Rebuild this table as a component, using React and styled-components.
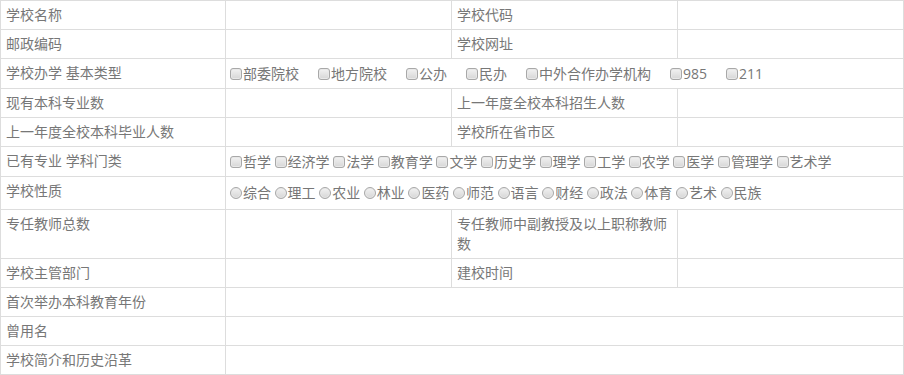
import styled, { createGlobalStyle } from 'styled-components';

const GlobalStyle = createGlobalStyle`
  body {
    margin: 0;
    background: #fff;
  }
`;

const InfoTable = styled.table`
  width: 904px;
  table-layout: fixed;
  border-collapse: collapse;
  font-family: "Open Sans", "Noto Sans CJK SC", sans-serif;
  font-size: 14px;
  line-height: 20px;
  color: #777;
`;

const Col = styled.col`
  width: ${props => props.$w}px;
`;

const Cell = styled.td`
  border: 1px solid #ddd;
  padding: 4px 5px;
  vertical-align: top;
  height: 20px;
  word-break: break-all;
`;

const Options = styled.div`
  display: flex;
  align-items: center;
  flex-wrap: wrap;
  height: ${props => props.$h}px;
  column-gap: ${props => props.$gap}px;
  margin-left: -1px;
`;

const Choice = styled.label`
  display: inline-flex;
  align-items: center;
  white-space: nowrap;
`;

const Tick = styled.input`
  appearance: none;
  width: 12px;
  height: 12px;
  margin: 0 1px 0 0;
  border: 1px solid #a8a8a8;
  border-radius: ${props => props.type === 'radio' ? '50%' : '3px'};
  background: linear-gradient(#f2f2f2, #d6d6d6);
  box-shadow: inset 0 0 0 1px #e8e8e8;
  box-sizing: border-box;
`;

const basicTypes = ['部委院校', '地方院校', '公办', '民办', '中外合作办学机构', '985', '211'];
const subjects = ['哲学', '经济学', '法学', '教育学', '文学', '历史学', '理学', '工学', '农学', '医学', '管理学', '艺术学'];
const natures = ['综合', '理工', '农业', '林业', '医药', '师范', '语言', '财经', '政法', '体育', '艺术', '民族'];

const ChoiceRow = ({ items, type, name, gap, h }) => (
  <Options $gap={gap} $h={h}>
    {items.map(item => (
      <Choice key={item}>
        <Tick type={type} name={name} />
        {item}
      </Choice>
    ))}
  </Options>
);

export default function App() {
  return (
    <>
      <GlobalStyle />
      <InfoTable>
        <colgroup>
          <Col $w={225} />
          <Col $w={226} />
          <Col $w={226} />
          <Col $w={226} />
        </colgroup>
        <tbody>
          <tr>
            <Cell>学校名称</Cell>
            <Cell />
            <Cell>学校代码</Cell>
            <Cell />
          </tr>
          <tr>
            <Cell>邮政编码</Cell>
            <Cell />
            <Cell>学校网址</Cell>
            <Cell />
          </tr>
          <tr>
            <Cell>学校办学 基本类型</Cell>
            <Cell colSpan={3}>
              <ChoiceRow items={basicTypes} type="checkbox" name="basic" gap={19} h={21} />
            </Cell>
          </tr>
          <tr>
            <Cell>现有本科专业数</Cell>
            <Cell />
            <Cell>上一年度全校本科招生人数</Cell>
            <Cell />
          </tr>
          <tr>
            <Cell>上一年度全校本科毕业人数</Cell>
            <Cell />
            <Cell>学校所在省市区</Cell>
            <Cell />
          </tr>
          <tr>
            <Cell>已有专业 学科门类</Cell>
            <Cell colSpan={3}>
              <ChoiceRow items={subjects} type="checkbox" name="subject" gap={3.6} h={21} />
            </Cell>
          </tr>
          <tr>
            <Cell>学校性质</Cell>
            <Cell colSpan={3}>
              <ChoiceRow items={natures} type="radio" name="nature" gap={3.6} h={24} />
            </Cell>
          </tr>
          <tr>
            <Cell>专任教师总数</Cell>
            <Cell />
            <Cell>专任教师中副教授及以上职称教师数</Cell>
            <Cell />
          </tr>
          <tr>
            <Cell>学校主管部门</Cell>
            <Cell />
            <Cell>建校时间</Cell>
            <Cell />
          </tr>
          <tr>
            <Cell>首次举办本科教育年份</Cell>
            <Cell colSpan={3} />
          </tr>
          <tr>
            <Cell>曾用名</Cell>
            <Cell colSpan={3} />
          </tr>
          <tr>
            <Cell>学校简介和历史沿革</Cell>
            <Cell colSpan={3} />
          </tr>
        </tbody>
      </InfoTable>
    </>
  );
}
